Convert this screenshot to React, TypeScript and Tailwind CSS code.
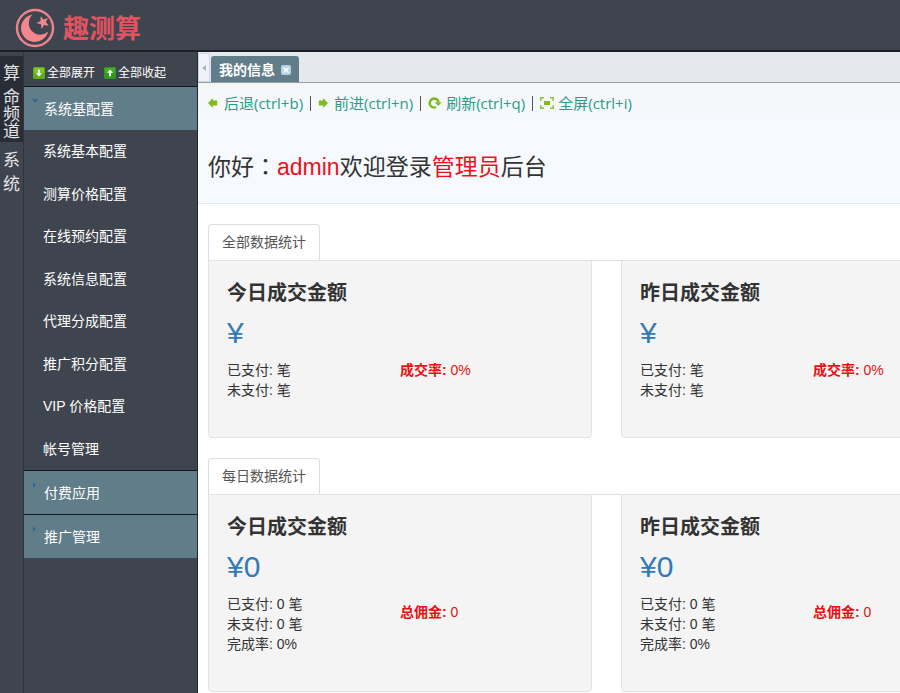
import React from "react";

const menuItems = [
  "系统基本配置",
  "测算价格配置",
  "在线预约配置",
  "系统信息配置",
  "代理分成配置",
  "推广积分配置",
  "VIP 价格配置",
  "帐号管理",
];

type Stat = { label: string; value: string };
type Card = { title: string; amount: string; rows: Stat[]; note: Stat };

const totals: Card[] = ["今日成交金额", "昨日成交金额"].map((title) => ({
  title,
  amount: "¥",
  rows: [
    { label: "已支付", value: "笔" },
    { label: "未支付", value: "笔" },
  ],
  note: { label: "成交率", value: "0%" },
}));

const daily: Card[] = ["今日成交金额", "昨日成交金额"].map((title) => ({
  title,
  amount: "¥0",
  rows: [
    { label: "已支付", value: "0 笔" },
    { label: "未支付", value: "0 笔" },
    { label: "完成率", value: "0%" },
  ],
  note: { label: "总佣金", value: "0" },
}));

function Logo() {
  return (
    <svg viewBox="0 0 40 40" className="h-10 w-10" aria-hidden="true">
      <circle cx="20" cy="20" r="18" fill="none" stroke="#ef858c" strokeWidth="2.4" />
      <path
        d="M17.5 6.6A13.8 13.8 0 1 0 33.2 23.6 A10 10 0 1 1 17.5 6.6Z"
        fill="#f4868d"
      />
      <path
        d="M25.6 8.2l3 3.4 4.4-1.6-2.2 4.1 3 3.6-4.7-.8-2.5 4-.6-4.7-4.6-1.2 4.2-2.1z"
        fill="#f4868d"
      />
    </svg>
  );
}

function ToggleIcon({ up = false }: { up?: boolean }) {
  return (
    <svg viewBox="0 0 12 12" className="h-3 w-3" aria-hidden="true">
      <rect width="12" height="12" rx="1.5" fill={up ? "#2f9a1d" : "#5cae1c"} />
      <rect x="1" y="1" width="10" height="5" rx="1" fill={up ? "#45ab2c" : "#7cc52e"} />
      <path
        d={up ? "M6 2.5l3 3.3H7v3.5H5V5.8H3z" : "M6 9.5L3 6.2h2V2.7h2v3.5h2z"}
        fill="#fff"
      />
    </svg>
  );
}

function ArrowIcon({ right = false }: { right?: boolean }) {
  return (
    <svg viewBox="0 0 10 10" className="h-[10px] w-[10px]" aria-hidden="true">
      <path
        d={right ? "M10 5L5.2 0V2.4H.8v5.2h4.4V10z" : "M0 5L4.8 0V2.4h4.4v5.2H4.8V10z"}
        fill="#7dbb1e"
      />
    </svg>
  );
}

function RefreshIcon() {
  return (
    <svg viewBox="0 0 14 12" className="h-3 w-[14px]" aria-hidden="true">
      <path d="M8 10.2A4.5 4.5 0 1 1 10.6 5" fill="none" stroke="#7dbb1e" strokeWidth="2.4" />
      <path d="M6.6 5.2h7L10.2 9z" fill="#7dbb1e" />
    </svg>
  );
}

function FullscreenIcon() {
  return (
    <svg viewBox="0 0 14 12" className="h-3 w-[14px]" aria-hidden="true">
      <rect x="4" y="4" width="6" height="4" fill="#7dbb1e" />
      <path
        d="M.8 3.8V.8h3.2M10 .8h3.2v3M13.2 8.2v3H10M4 11.2H.8v-3"
        fill="none"
        stroke="#8cc63f"
        strokeWidth="1.6"
      />
    </svg>
  );
}

function Separator() {
  return <span className="mx-[7px] h-[15px] w-px bg-[#555]" />;
}

function Group({ title, open = false }: { title: string; open?: boolean }) {
  return (
    <button
      type="button"
      aria-expanded={open}
      className="flex h-11 w-full items-center border-t border-[#14181d] bg-[#617d8a] text-left text-sm text-white"
    >
      <svg viewBox="0 0 6 6" className="mr-[6px] mb-4 ml-2 h-[6px] w-[6px]" aria-hidden="true">
        <path d={open ? "M0 1h6L3 5z" : "M1 0v6l3-3z"} fill="#2f6c8c" />
      </svg>
      {title}
    </button>
  );
}

function StatCard({ card }: { card: Card }) {
  return (
    <article className="w-96 shrink-0 rounded-b border border-[#e3e3e3] bg-[#f4f4f4] px-[18px] pt-4 pb-[37px]">
      <h2 className="text-[20px] leading-8 font-bold text-[#333]">{card.title}</h2>
      <p className="mt-1 text-[30px] leading-10 text-[#337ab7]">{card.amount}</p>
      <div className="mt-[7px] grid grid-cols-2 text-[#333]">
        <ul>
          {card.rows.map((r) => (
            <li key={r.label}>
              {r.label}: {r.value}
            </li>
          ))}
        </ul>
        <p className={card.rows.length > 2 ? "pt-2 text-[#ea1010]" : "text-[#ea1010]"}>
          <b>{card.note.label}:</b> {card.note.value}
        </p>
      </div>
    </article>
  );
}

function StatSection({ title, cards }: { title: string; cards: Card[] }) {
  return (
    <section className="mt-5 pl-[10px]">
      <div className="flex border-b border-[#ddd]">
        <button
          type="button"
          className="-mb-px h-[37px] rounded-t border border-b-0 border-[#ddd] bg-white px-[13px] pb-[2px] text-sm text-[#555]"
        >
          {title}
        </button>
      </div>
      <div className="-mt-px flex gap-[29px] text-sm leading-5">
        {cards.map((c) => (
          <StatCard key={c.title} card={c} />
        ))}
      </div>
    </section>
  );
}

export default function App() {
  return (
    <div className="flex h-screen flex-col overflow-hidden bg-[#3f454e] font-['Liberation_Sans','Noto_Sans_CJK_SC',sans-serif]">
      <header className="flex h-[52px] shrink-0 items-center gap-2 border-b-2 border-[#1b1f25] pt-[6px] pl-[15px]">
        <Logo />
        <h1 className="pt-[2px] text-[26px] leading-8 font-bold text-[#e25361]">趣测算</h1>
      </header>

      <div className="flex min-h-0 flex-1">
        <nav className="flex w-6 shrink-0 flex-col border-r border-[#30353c] pt-1 text-[17px] text-[#e4e6e8]">
          <button type="button" className="flex flex-col items-center bg-[#292e36] pt-[6px] pb-[2px]">
            <span className="leading-6">算</span>
            <span className="w-[17px] pt-[3px] leading-[17px]">命频道</span>
          </button>
          <button type="button" className="flex flex-col items-center pt-[7px]">
            <span className="w-[17px] leading-6">系统</span>
          </button>
        </nav>

        <aside className="w-[174px] shrink-0 border-r border-[#23282e]">
          <div className="flex h-[34px] items-center gap-[9px] pt-2 pl-[9px] text-[12px] text-white">
            <button type="button" className="flex items-center gap-[2px]">
              <ToggleIcon />
              全部展开
            </button>
            <button type="button" className="flex items-center gap-[2px]">
              <ToggleIcon up />
              全部收起
            </button>
          </div>
          <Group title="系统基配置" open />
          <ul className="flex h-[340px] flex-col text-sm text-white">
            {menuItems.map((m) => (
              <li key={m} className="flex flex-1 items-center pl-[19px]">
                <a href="#">{m}</a>
              </li>
            ))}
          </ul>
          <Group title="付费应用" />
          <Group title="推广管理" />
        </aside>

        <main className="min-w-0 flex-1 overflow-hidden bg-white">
          <div className="flex h-[31px] items-end border-b border-[#9a9ea3] bg-[#e5e8ed]">
            <button
              type="button"
              aria-label="向左滚动"
              className="flex h-[29px] w-3 items-center justify-center border border-[#cdd5e2] bg-[#eff3f9]"
            >
              <svg viewBox="0 0 4 6" className="h-[6px] w-1" aria-hidden="true">
                <path d="M4 0v6L0 3z" fill="#a9b4c2" />
              </svg>
            </button>
            <div className="ml-px flex h-[26px] items-center gap-[6px] rounded-t-[3px] bg-[#617d8a] px-2 pt-[2px] text-sm font-bold text-white">
              我的信息
              <button type="button" aria-label="关闭" className="flex h-[10px] w-[10px] items-center justify-center rounded-[2px] bg-[#b9d3e0]">
                <svg viewBox="0 0 6 6" className="h-[6px] w-[6px]" aria-hidden="true">
                  <path d="M.5.5l5 5M5.5.5l-5 5" stroke="#fff" strokeWidth="1.4" />
                </svg>
              </button>
            </div>
          </div>

          <div className="border-b border-[#e6e9ec] bg-linear-to-b from-[#f4f5f7] to-[#f6fafe] to-35%">
            <div className="flex h-10 items-center pl-[10px] font-['Open_Sans','Noto_Sans_CJK_SC',sans-serif] text-[15px] whitespace-nowrap text-[#2b9c86]">
              <button type="button" className="flex items-center gap-[6px]">
                <ArrowIcon />
                后退(ctrl+b)
              </button>
              <Separator />
              <button type="button" className="flex items-center gap-[6px]">
                <ArrowIcon right />
                前进(ctrl+n)
              </button>
              <Separator />
              <button type="button" className="flex items-center gap-1">
                <RefreshIcon />
                刷新(ctrl+q)
              </button>
              <Separator />
              <button type="button" className="flex items-center gap-1">
                <FullscreenIcon />
                全屏(ctrl+i)
              </button>
            </div>
            <p className="px-[10px] pt-[26px] pb-5 text-[23px] leading-8 whitespace-nowrap text-[#333]">
              你好<span className="font-['Noto_Sans_CJK_TC',sans-serif]">：</span>
              <span className="text-[#f0101a]">admin</span>欢迎登录
              <span className="text-[#f0101a]">管理员</span>后台
            </p>
          </div>

          <StatSection title="全部数据统计" cards={totals} />
          <StatSection title="每日数据统计" cards={daily} />
        </main>
      </div>
    </div>
  );
}
